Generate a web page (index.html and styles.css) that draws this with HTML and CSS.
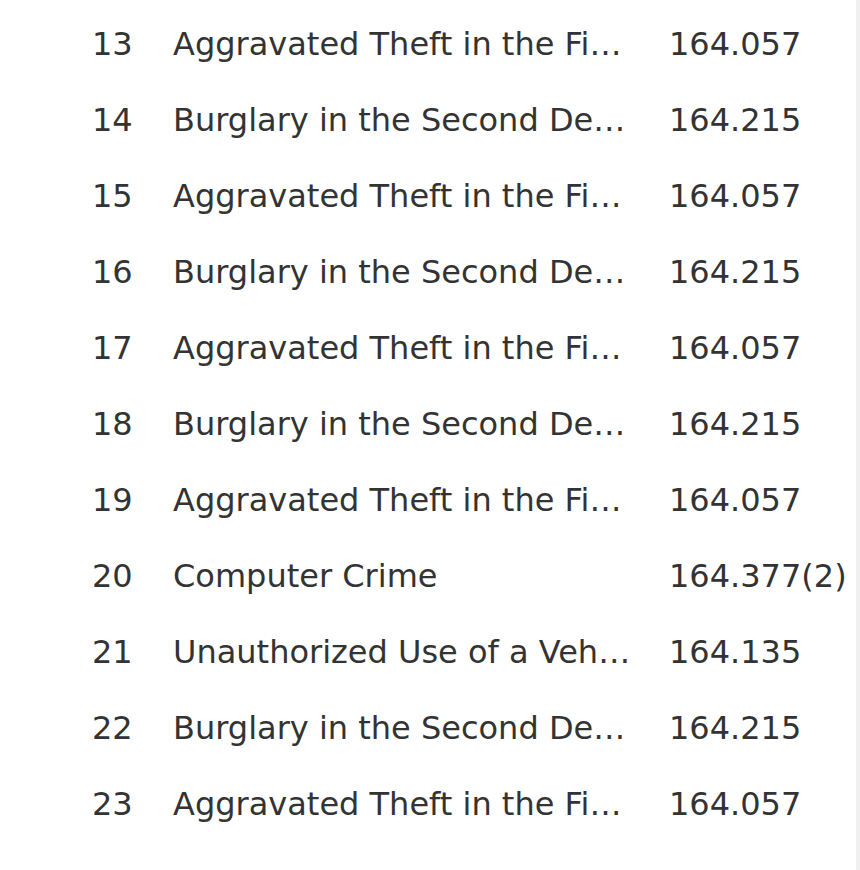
FILE: index.html
```html
<!DOCTYPE html>
<html>
<head>
<meta charset="utf-8">
<link rel="stylesheet" href="styles.css">
</head>
<body>
<div class="page">
  <div class="list">
    <div class="row"><span class="num">13</span><span class="name">Aggravated Theft in the First Degree</span><span class="code">164.057</span></div>
    <div class="row"><span class="num">14</span><span class="name">Burglary in the Second Degree</span><span class="code">164.215</span></div>
    <div class="row"><span class="num">15</span><span class="name">Aggravated Theft in the First Degree</span><span class="code">164.057</span></div>
    <div class="row"><span class="num">16</span><span class="name">Burglary in the Second Degree</span><span class="code">164.215</span></div>
    <div class="row"><span class="num">17</span><span class="name">Aggravated Theft in the First Degree</span><span class="code">164.057</span></div>
    <div class="row"><span class="num">18</span><span class="name">Burglary in the Second Degree</span><span class="code">164.215</span></div>
    <div class="row"><span class="num">19</span><span class="name">Aggravated Theft in the First Degree</span><span class="code">164.057</span></div>
    <div class="row"><span class="num">20</span><span class="name">Computer Crime</span><span class="code">164.377(2)</span></div>
    <div class="row"><span class="num">21</span><span class="name">Unauthorized Use of a Vehicle</span><span class="code">164.135</span></div>
    <div class="row"><span class="num">22</span><span class="name">Burglary in the Second Degree</span><span class="code">164.215</span></div>
    <div class="row"><span class="num">23</span><span class="name">Aggravated Theft in the First Degree</span><span class="code">164.057</span></div>
  </div>
  <div class="track"></div>
</div>
</body>
</html>
```
FILE: styles.css
```css
html, body {
  margin: 0;
  padding: 0;
  background: #ffffff;
}
.page {
  display: flex;
  height: 870px;
  overflow: hidden;
}
.list {
  flex: 1;
  display: flex;
  flex-direction: column;
  padding-top: 6px;
  padding-left: 92px;
  font-family: "DejaVu Sans", Verdana, sans-serif;
  font-size: 32px;
  color: #333333;
}
.row {
  display: flex;
  align-items: center;
  height: 76px;
  white-space: nowrap;
}
.num {
  width: 81px;
  flex: none;
}
.name {
  width: 460px;
  flex: none;
  overflow: hidden;
  text-overflow: ellipsis;
  margin-right: 36px;
}
.code {
  flex: none;
}
.track {
  width: 4px;
  flex: none;
  background: #f0f0f0;
}
```
